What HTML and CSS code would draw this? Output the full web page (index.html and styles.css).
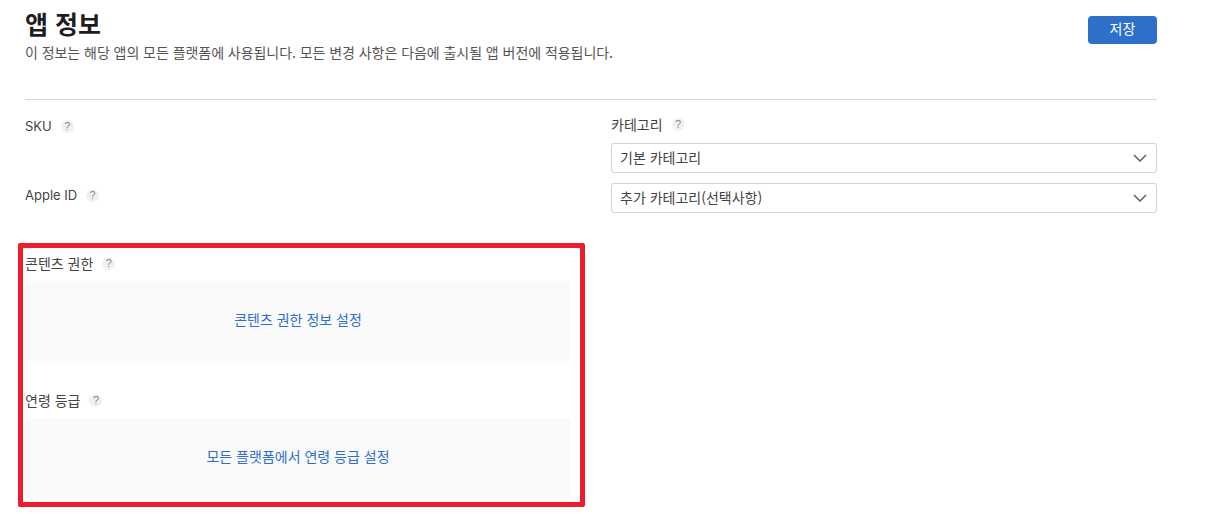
FILE: index.html
```html
<!DOCTYPE html>
<html lang="ko">
<head>
<meta charset="utf-8">
<title>앱 정보</title>
<link rel="stylesheet" href="styles.css">
</head>
<body>
<main class="page">
  <header class="head">
    <div class="head-text">
      <h1 class="title">앱 정보</h1>
      <p class="desc">이 정보는 해당 앱의 모든 플랫폼에 사용됩니다. 모든 변경 사항은 다음에 출시될 앱 버전에 적용됩니다.</p>
    </div>
    <button class="save">저장</button>
  </header>
  <div class="columns">
    <section class="col">
      <div class="label latin l-sku">SKU <span class="q">?</span></div>
      <div class="label latin l-id">Apple ID <span class="q">?</span></div>
      <div class="label l-rights">콘텐츠 권한 <span class="q">?</span></div>
      <div class="panel"><a class="link">콘텐츠 권한 정보 설정</a></div>
      <div class="label l-age">연령 등급 <span class="q">?</span></div>
      <div class="panel"><a class="link">모든 플랫폼에서 연령 등급 설정</a></div>
    </section>
    <section class="col">
      <div class="label l-cat">카테고리 <span class="q">?</span></div>
      <div class="select">기본 카테고리<svg class="chev" width="14" height="8" viewBox="0 0 14 8"><path d="M1 1l6 6 6-6" fill="none" stroke="#555" stroke-width="1.4"/></svg></div>
      <div class="select second">추가 카테고리(선택사항)<svg class="chev" width="14" height="8" viewBox="0 0 14 8"><path d="M1 1l6 6 6-6" fill="none" stroke="#555" stroke-width="1.4"/></svg></div>
    </section>
  </div>
  <div class="highlight"></div>
</main>
</body>
</html>
```
FILE: styles.css
```css
* { box-sizing: border-box; }
html, body { margin: 0; background: #fff; }
body {
  font-family: "Noto Sans CJK KR", "Liberation Sans", sans-serif;
  color: #444;
  font-size: 14px;
  height: 514px;
  overflow: hidden;
}
.page { position: relative; width: 1213px; height: 514px; padding: 0 56px 0 25px; }
.head {
  display: flex;
  justify-content: space-between;
  align-items: flex-start;
  height: 100px;
  border-bottom: 1px solid #d6d6d6;
}
.title {
  margin: 5px 0 0;
  font-size: 25px;
  line-height: 36px;
  font-weight: 700;
  color: #1d1d1f;
}
.desc { margin: 2px 0 0; font-size: 14px; line-height: 18px; color: #555; letter-spacing: -0.05px; }
.save {
  margin-top: 16px;
  width: 69px;
  height: 28px;
  border: 0;
  border-radius: 4px;
  background: #2e6fc9;
  color: #fff;
  font: 14px "Noto Sans CJK KR", sans-serif;
  padding: 0 0 4px;
}
.columns { display: grid; grid-template-columns: 546px 546px; column-gap: 40px; }
.col { display: flex; flex-direction: column; }
.label { display: flex; align-items: center; gap: 9px; font-size: 14px; line-height: 18px; color: #444; height: 18px; }
.latin { font-family: "Inter", "Liberation Sans", sans-serif; font-size: 13px; }
.l-sku { margin-top: 17px; }
.l-cat { margin-top: 15px; }
.l-id { margin-top: 51px; }
.l-rights { margin-top: 50px; }
.l-age { margin-top: 30px; }
.q {
  flex: none;
  width: 13px;
  height: 13px;
  border-radius: 50%;
  background: #f1f1f1;
  color: #888;
  font: 11px/13px "Liberation Sans", sans-serif;
  text-align: center;
  margin-top: 1px;
}
.panel {
  margin-top: 9px;
  height: 80px;
  border-radius: 4px;
  background: #fafafa;
  display: flex;
  align-items: center;
  justify-content: center;
  padding-bottom: 5px;
}
.link { color: #2e6fc9; font-size: 14px; }
.select {
  margin-top: 10px;
  height: 30px;
  border: 1px solid #d2d2d2;
  border-radius: 3px;
  padding: 0 9px 3px 8px;
  display: flex;
  align-items: center;
  justify-content: space-between;
  font-size: 14px;
  color: #444;
}
.select .chev { margin-top: 3px; }
.highlight {
  position: absolute;
  left: 18px;
  top: 243px;
  width: 567px;
  height: 264px;
  border: 5px solid #ed1c2a;
  border-radius: 2px;
}
```
